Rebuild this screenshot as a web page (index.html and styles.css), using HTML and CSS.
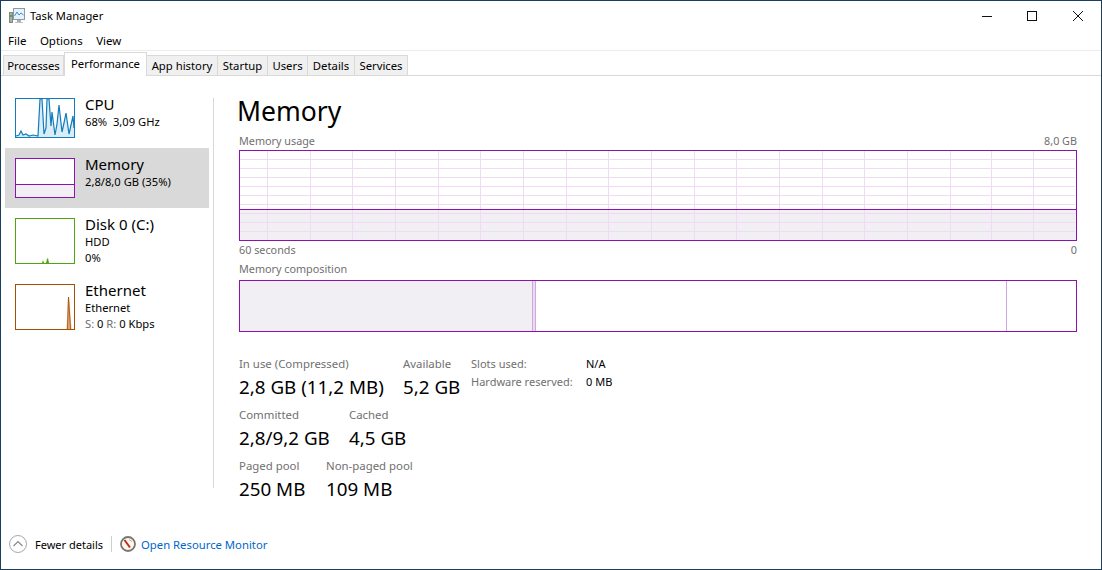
FILE: index.html
```html
<!DOCTYPE html>
<html lang="en">
<head>
<meta charset="utf-8">
<title>Task Manager</title>
<link rel="stylesheet" href="styles.css">
</head>
<body>
<div class="window">
  <header class="titlebar">
    <svg class="app-icon" width="16" height="16" viewBox="0 0 16 16">
      <rect x="0.5" y="4.5" width="3" height="10" fill="#a9b0a8" stroke="#7f8a80"/>
      <rect x="1" y="7" width="2" height="2" fill="#58a04a"/>
      <rect x="4.5" y="0.5" width="11" height="11" fill="#e6f2fb" stroke="#8d9aa6"/>
      <path d="M5.5 8 L8 4 L10 7 L12 5 L14.5 7" fill="none" stroke="#3f8fd0" stroke-width="1"/>
      <rect x="8" y="12" width="4" height="2" fill="#a8aeb4"/>
      <rect x="6" y="14" width="8" height="1" fill="#c0c4c8"/>
    </svg>
    <span class="app-title">Task Manager</span>
    <div class="caption">
      <svg width="10" height="10" viewBox="0 0 10 10"><path d="M0 5.5H10" stroke="#111" fill="none"/></svg>
      <svg width="10" height="10" viewBox="0 0 10 10"><rect x="0.5" y="0.5" width="9" height="9" stroke="#111" fill="none"/></svg>
      <svg width="10" height="10" viewBox="0 0 10 10"><path d="M0 0L10 10M10 0L0 10" stroke="#111" fill="none"/></svg>
    </div>
  </header>
  <nav class="menu"><span>File</span><span>Options</span><span>View</span></nav>
  <div class="tabs">
    <span class="tab t-proc">Processes</span>
    <span class="tab active t-perf">Performance</span>
    <span class="tab t-app">App history</span>
    <span class="tab t-start">Startup</span>
    <span class="tab t-users">Users</span>
    <span class="tab t-det">Details</span>
    <span class="tab t-serv">Services</span>
  </div>
  <main class="content">
    <aside class="sidebar">
      <div class="item item-60">
        <svg class="thumb" width="60" height="40" viewBox="0 0 60 40">
          <path d="M1 39V38L4 37L6 33L8 37L11 36L14 38L18 37L23 38L25 1L27 1L29 36L31 30L32 1L34 1L36 28L37 14L40 37L42 26L44 7L47 34L49 25L51 15L54 36L56 27L58 18L59 30V39Z" fill="#d9ecf7"/>
          <path d="M1 38L4 37L6 33L8 37L11 36L14 38L18 37L23 38L25 1L27 1L29 36L31 30L32 1L34 1L36 28L37 14L40 37L42 26L44 7L47 34L49 25L51 15L54 36L56 27L58 18L59 30" fill="none" stroke="#117dbb" stroke-width="1.2"/>
          <rect x="0.5" y="0.5" width="59" height="39" fill="none" stroke="#117dbb"/>
        </svg>
        <div class="item-text"><div class="item-name">CPU</div><div class="item-sub">68%&nbsp; 3,09 GHz</div></div>
      </div>
      <div class="item item-60 selected">
        <svg class="thumb" width="60" height="40" viewBox="0 0 60 40">
          <rect width="60" height="40" fill="#fff"/>
          <rect y="26" width="60" height="14" fill="#f1eff3"/>
          <path d="M0 26.5H60" stroke="#8b12ae"/>
          <rect x="0.5" y="0.5" width="59" height="39" fill="none" stroke="#8b12ae"/>
        </svg>
        <div class="item-text"><div class="item-name">Memory</div><div class="item-sub">2,8/8,0 GB (35%)</div></div>
      </div>
      <div class="item item-66">
        <svg class="thumb" width="60" height="46" viewBox="0 0 60 46">
          <path d="M27 45L28 42L29 45ZM31 45L32 41L33 40L34 45Z" fill="#4da60c"/>
          <rect x="0.5" y="0.5" width="59" height="45" fill="none" stroke="#4da60c"/>
        </svg>
        <div class="item-text"><div class="item-name">Disk 0 (C:)</div><div class="item-sub">HDD</div><div class="item-sub">0%</div></div>
      </div>
      <div class="item item-66">
        <svg class="thumb" width="60" height="46" viewBox="0 0 60 46">
          <path d="M51.5 45L53 13H54L56.5 45Z" fill="#e2aa80"/>
          <path d="M52.5 45L53.5 13L55.5 45" fill="none" stroke="#a74f01" stroke-width="0.8"/>
          <rect x="0.5" y="0.5" width="59" height="45" fill="none" stroke="#a74f01"/>
        </svg>
        <div class="item-text"><div class="item-name">Ethernet</div><div class="item-sub">Ethernet</div><div class="item-sub"><span class="muted">S:</span> 0 <span class="muted">R:</span> 0 Kbps</div></div>
      </div>
    </aside>
    <section class="panel">
      <h1>Memory</h1>
      <div class="caption-row top"><span>Memory usage</span><span>8,0 GB</span></div>
      <svg class="graph" width="838" height="91" viewBox="0 0 838 91" shape-rendering="crispEdges">
        <rect y="59" width="838" height="32" fill="#f1eff3"/>
        <path stroke="#eedcf3" fill="none" d="M0 9.5H836M0 18.5H836M0 27.5H836M0 36.5H836M0 45.5H836M0 54.5H836M0 63.5H836M0 72.5H836M0 81.5H836"/>
        <path stroke="#eedcf3" fill="none" d="M28.5 0V91M71.5 0V91M113.5 0V91M156.5 0V91M199.5 0V91M241.5 0V91M284.5 0V91M327.5 0V91M369.5 0V91M412.5 0V91M455.5 0V91M497.5 0V91M540.5 0V91M583.5 0V91M625.5 0V91M668.5 0V91M711.5 0V91M752.5 0V91M794.5 0V91"/>
        <path stroke="#8b12ae" fill="none" d="M0 59.5H838"/>
        <rect x="0.5" y="0.5" width="837" height="90" fill="none" stroke="#8b12ae"/>
      </svg>
      <div class="caption-row bottom"><span>60 seconds</span><span>0</span></div>
      <div class="comp-label">Memory composition</div>
      <div class="composition">
        <div class="seg seg-use"></div>
        <div class="seg seg-mod"></div>
        <div class="seg seg-standby"></div>
        <div class="seg seg-free"></div>
      </div>
      <div class="stats">
        <div class="stats-left">
          <div class="stat-row">
            <div class="stat w164"><div class="label">In use (Compressed)</div><div class="value">2,8 GB (11,2 MB)</div></div>
            <div class="stat w68"><div class="label">Available</div><div class="value">5,2 GB</div></div>
          </div>
          <div class="stat-row">
            <div class="stat w110"><div class="label">Committed</div><div class="value">2,8/9,2 GB</div></div>
            <div class="stat"><div class="label">Cached</div><div class="value">4,5 GB</div></div>
          </div>
          <div class="stat-row">
            <div class="stat w87"><div class="label">Paged pool</div><div class="value">250 MB</div></div>
            <div class="stat"><div class="label">Non-paged pool</div><div class="value">109 MB</div></div>
          </div>
        </div>
        <dl class="hw">
          <dt>Slots used:</dt><dd>N/A</dd>
          <dt>Hardware reserved:</dt><dd>0 MB</dd>
        </dl>
      </div>
    </section>
  </main>
  <footer class="footer">
    <svg width="18" height="18" viewBox="0 0 18 18"><circle cx="9" cy="9" r="8.5" fill="#fff" stroke="#a8a8a8"/><path d="M4.5 11L9 6.5L13.5 11" fill="none" stroke="#8a8a8a" stroke-width="1.2"/></svg>
    <span class="fewer">Fewer details</span>
    <span class="sep"></span>
    <svg width="16" height="16" viewBox="0 0 16 16"><circle cx="8" cy="8" r="7" fill="#fff8f0" stroke="#77766f" stroke-width="1.8"/><path d="M4.5 4L10 11.5" stroke="#c8281c" stroke-width="2"/><path d="M9 3.5L12 5.5" stroke="#e8a878"/></svg>
    <a class="link" href="#">Open Resource Monitor</a>
  </footer>
</div>
</body>
</html>
```

FILE: styles.css
```css
* { box-sizing: border-box; }
html, body { margin: 0; height: 100%; }
body {
  font-family: "Noto Sans", "Open Sans", sans-serif;
  font-size: 11.5px;
  color: #000;
  background: #fff;
}
.window {
  width: 1102px;
  height: 570px;
  border: 1px solid #1c3d5c;
  display: flex;
  flex-direction: column;
  overflow: hidden;
}
.titlebar {
  height: 29px;
  display: flex;
  align-items: center;
  padding-left: 8px;
  flex: none;
}
.app-icon { margin-right: 5px; }
.app-title { font-size: 11.2px; }
.caption {
  margin-left: auto;
  display: flex;
  gap: 35px;
  padding-right: 18px;
}
.caption svg:last-child { margin-left: 1px; }
.menu {
  height: 21px;
  display: flex;
  gap: 13.5px;
  align-items: center;
  padding-left: 7px;
  border-bottom: 1px solid #ececec;
  flex: none;
}
.tabs {
  height: 25px;
  display: flex;
  align-items: flex-end;
  padding-left: 2px;
  border-bottom: 1px solid #d9d9d9;
  flex: none;
}
.tab {
  height: 21px;
  margin-bottom: -1px;
  padding-bottom: 1px;
  border: 1px solid #d9d9d9;
  border-left: 0;
  background: #f0f0f0;
  display: flex;
  align-items: center;
  justify-content: center;
  font-size: 11.3px;
}
.t-proc { width: 61px; border-left: 1px solid #d9d9d9; }
.t-perf { width: 83px; }
.t-app { width: 71px; }
.t-start { width: 50px; }
.t-users { width: 40px; }
.t-det { width: 47px; }
.t-serv { width: 53px; }
.tab.active {
  height: 24px;
  background: #fff;
  border: 1px solid #d9d9d9;
  border-bottom: 0;
  padding-bottom: 2px;
  position: relative;
}
.content {
  flex: 1;
  display: flex;
  min-height: 0;
}
.sidebar {
  width: 208px;
  margin: 12px 0 0 4px;
  flex: none;
  height: 412px;
  position: relative;
}
.sidebar::after {
  content: "";
  position: absolute;
  right: -1px;
  top: 10px;
  bottom: 12px;
  width: 1px;
  background: #d9d9d9;
}
.item {
  display: flex;
  padding: 10px 0 0 10px;
  width: 204px;
}
.item-60 { height: 60px; }
.item-66 { height: 66px; }
.selected { background: #d9d9d9; }
.thumb { flex: none; margin-right: 10px; }
.item-text { margin-top: -3px; }
.item-name { font-size: 15px; line-height: 19px; }
.item-sub { font-size: 11.2px; line-height: 15.5px; }
.muted { color: #6d6d6d; }
.panel {
  flex: 1;
  padding: 17px 0 0 26px;
  min-width: 0;
}
h1 {
  margin: 0 0 0 -2px;
  font-size: 26.5px;
  font-weight: 400;
  line-height: 37px;
}
.caption-row {
  width: 838px;
  display: flex;
  justify-content: space-between;
  color: #707070;
  font-size: 10.8px;
  line-height: 15px;
}
.caption-row.top { margin-top: 3px; height: 15px; margin-bottom: 2px; }
.caption-row.bottom { margin-top: 1px; }
.graph { display: block; }
.comp-label {
  color: #707070;
  font-size: 10.8px;
  line-height: 15px;
  margin-top: 4px;
}
.composition {
  width: 838px;
  height: 52px;
  margin-top: 4px;
  border: 1px solid #8b12ae;
  display: flex;
}
.seg-use { width: 293px; background: #f1eff3; border-right: 1px solid #cfa8dc; }
.seg-mod { width: 3px; background: #ead9f0; border-right: 1px solid #cfa8dc; }
.seg-standby { width: 471px; border-right: 1px solid #cfa8dc; }
.stats {
  display: flex;
  margin-top: 24px;
}
.stats-left { width: 232px; flex: none; }
.stat-row { display: flex; height: 51px; }
.w164 { width: 164px; }
.w68 { width: 68px; }
.w110 { width: 110px; }
.w87 { width: 87px; }
.label { color: #707070; font-size: 11.4px; line-height: 15px; }
.value { font-size: 18.8px; line-height: 25px; margin-top: 4px; white-space: nowrap; }
.stat { white-space: nowrap; }
.hw {
  margin: 0;
  display: grid;
  grid-template-columns: 115px auto;
  grid-auto-rows: 18px;
  line-height: 15px;
  font-size: 11px;
}
.hw dt { color: #707070; }
.hw dd { margin: 0; }
.footer {
  height: 50px;
  margin-top: auto;
  flex: none;
  display: flex;
  align-items: center;
  padding: 0 0 0 8px;
}
.fewer { margin-left: 8px; font-size: 11px; }
.sep { width: 1px; height: 16px; background: #cfcfcf; margin: 0 8px; }
.link { margin-left: 5px; color: #0066cc; text-decoration: none; font-size: 11.3px; }
```
